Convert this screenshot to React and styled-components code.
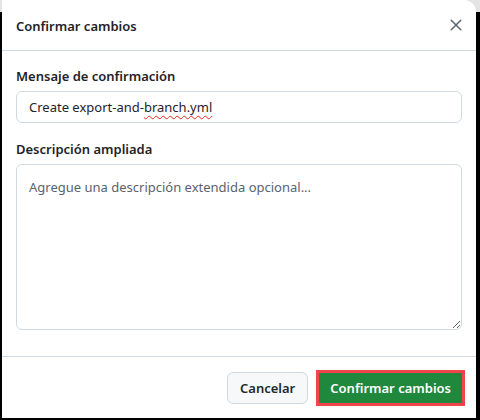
import React from "react";
import styled, { createGlobalStyle } from "styled-components";

const Global = createGlobalStyle`
  html, body { margin: 0; padding: 0; background: #fff; }
  body { font-family: "Noto Sans", "Liberation Sans", sans-serif; }
  * { box-sizing: border-box; }
`;

const Frame = styled.div`
  width: 480px;
  height: 420px;
  background: linear-gradient(to bottom, #e4e4e4 0 12px, #000 12px);
  padding: 0 4px 2px 2px;
  display: flex;
`;

const Dialog = styled.div`
  flex: 1;
  background: #fff;
  border-radius: 0 12px 0 0;
  display: flex;
  flex-direction: column;
  color: #1f2328;
`;

const Header = styled.div`
  height: 51px;
  flex: none;
  display: flex;
  align-items: center;
  justify-content: space-between;
  padding: 0 8px 0 14px;
  border-bottom: 1px solid #d1d9e0;
`;

const Title = styled.h1`
  margin: 0;
  font-size: 13px;
  font-weight: 600;
  padding-top: 1px;
`;

const CloseButton = styled.button`
  width: 24px;
  height: 24px;
  border: 0;
  background: transparent;
  padding: 0;
  display: flex;
  align-items: center;
  justify-content: center;
  color: #59636e;
  cursor: pointer;
`;

const Body = styled.div`
  flex: 1;
  padding: 15px 14px 0 14px;
  display: flex;
  flex-direction: column;
  border-bottom: 1px solid #d1d9e0;
`;

const Label = styled.label`
  display: block;
  font-size: 13px;
  font-weight: 600;
  line-height: 20px;
  margin-bottom: 5px;
`;

const Field = styled.div`
  height: 32px;
  border: 1px solid #d1d9e0;
  border-radius: 6px;
  padding: 0 12px;
  display: flex;
  align-items: center;
  font-size: 13px;
  color: #1f2328;
  margin-bottom: 16px;
  white-space: pre;
`;

const Misspelled = styled.span`
  text-decoration: underline wavy #e0271a;
  text-decoration-thickness: 1px;
  text-underline-offset: 3px;
`;

const TextArea = styled.textarea`
  display: block;
  width: 100%;
  height: 166px;
  border: 1px solid #d1d9e0;
  border-radius: 6px;
  padding: 12px 12px;
  font-family: inherit;
  font-size: 13px;
  line-height: 20px;
  color: #1f2328;
  resize: both;
  outline: none;
  &::placeholder { color: #59636e; }
`;

const Footer = styled.div`
  height: 61px;
  flex: none;
  display: flex;
  align-items: center;
  justify-content: flex-end;
  gap: 8px;
  padding: 0 11px 0 14px;
`;

const Button = styled.button`
  height: ${(p) => (p.$primary ? "36px" : "32px")};
  padding: 0 ${(p) => (p.$primary ? "11px" : "12px")};
  border-radius: ${(p) => (p.$primary ? "0" : "6px")};
  font-family: inherit;
  font-size: 13px;
  font-weight: 600;
  cursor: pointer;
  border: ${(p) => (p.$primary ? "3px solid #f0454a" : "1px solid #d1d9e0")};
  background: ${(p) => (p.$primary ? "#1f883d" : "#f6f8fa")};
  color: ${(p) => (p.$primary ? "#fff" : "#25292e")};
`;

export default function App() {
  return (
    <>
      <Global />
      <Frame>
        <Dialog>
          <Header>
            <Title>Confirmar cambios</Title>
            <CloseButton aria-label="Cerrar">
              <svg width="12" height="12" viewBox="0 0 12 12" fill="none">
                <path d="M1.25 1.25l9.5 9.5M10.75 1.25l-9.5 9.5" stroke="currentColor" strokeWidth="1.5" strokeLinecap="round" />
              </svg>
            </CloseButton>
          </Header>
          <Body>
            <Label>Mensaje de confirmación</Label>
            <Field>
              Create export-and-<Misspelled>branch.yml</Misspelled>
            </Field>
            <Label>Descripción ampliada</Label>
            <TextArea placeholder="Agregue una descripción extendida opcional..." />
          </Body>
          <Footer>
            <Button>Cancelar</Button>
            <Button $primary>Confirmar cambios</Button>
          </Footer>
        </Dialog>
      </Frame>
    </>
  );
}
